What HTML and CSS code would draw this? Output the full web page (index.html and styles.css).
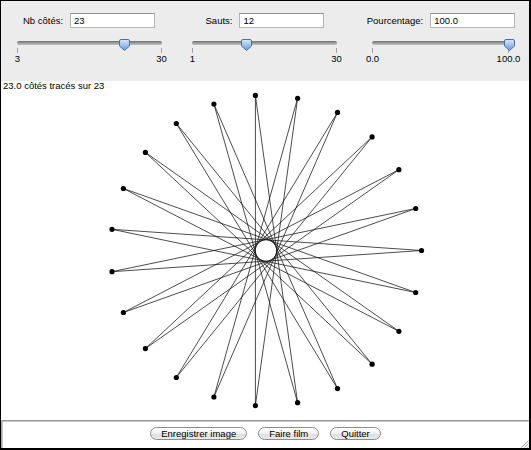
FILE: index.html
```html
<!DOCTYPE html>
<html>
<head>
<meta charset="utf-8">
<link rel="stylesheet" href="styles.css">
</head>
<body>
<div class="window">
  <div class="controls">
    <div class="group">
      <div class="field-row"><span class="lbl">Nb côtés:</span><div class="field">23</div></div>
      <div class="slider s1">
        <div class="track">
          <span class="thumb" style="left:74.07%"><svg width="11" height="12" viewBox="0 0 11 12"><defs><linearGradient id="tg1" x1="0" y1="0" x2="0" y2="1"><stop offset="0" stop-color="#dbe8fa"/><stop offset="0.5" stop-color="#9fc0ee"/><stop offset="1" stop-color="#6e98d8"/></linearGradient></defs><path d="M0.5 2 Q0.5 0.5 2 0.5 H9 Q10.5 0.5 10.5 2 V7 L5.5 11.5 L0.5 7 Z" fill="url(#tg1)" stroke="#4a6fab" stroke-width="1"/></svg></span>
        </div>
        <div class="ticks"><div class="tk"><i></i><span>3</span></div><div class="tk"><i></i><span>30</span></div></div>
      </div>
    </div>
    <div class="group">
      <div class="field-row"><span class="lbl">Sauts:</span><div class="field">12</div></div>
      <div class="slider s2">
        <div class="track">
          <span class="thumb" style="left:37.93%"><svg width="11" height="12" viewBox="0 0 11 12"><defs><linearGradient id="tg2" x1="0" y1="0" x2="0" y2="1"><stop offset="0" stop-color="#dbe8fa"/><stop offset="0.5" stop-color="#9fc0ee"/><stop offset="1" stop-color="#6e98d8"/></linearGradient></defs><path d="M0.5 2 Q0.5 0.5 2 0.5 H9 Q10.5 0.5 10.5 2 V7 L5.5 11.5 L0.5 7 Z" fill="url(#tg2)" stroke="#4a6fab" stroke-width="1"/></svg></span>
        </div>
        <div class="ticks"><div class="tk"><i></i><span>1</span></div><div class="tk"><i></i><span>30</span></div></div>
      </div>
    </div>
    <div class="group">
      <div class="field-row"><span class="lbl">Pourcentage:</span><div class="field">100.0</div></div>
      <div class="slider s3">
        <div class="track">
          <span class="thumb" style="left:100%"><svg width="11" height="12" viewBox="0 0 11 12"><defs><linearGradient id="tg3" x1="0" y1="0" x2="0" y2="1"><stop offset="0" stop-color="#dbe8fa"/><stop offset="0.5" stop-color="#9fc0ee"/><stop offset="1" stop-color="#6e98d8"/></linearGradient></defs><path d="M0.5 2 Q0.5 0.5 2 0.5 H9 Q10.5 0.5 10.5 2 V7 L5.5 11.5 L0.5 7 Z" fill="url(#tg3)" stroke="#4a6fab" stroke-width="1"/></svg></span>
        </div>
        <div class="ticks"><div class="tk"><i></i><span>0.0</span></div><div class="tk"><i></i><span>100.0</span></div></div>
      </div>
    </div>
  </div>

  <div class="canvas">
    <div class="status">23.0 côtés tracés sur 23</div>
    <svg class="drawing" width="528" height="339" viewBox="1 81 528 339">
      <polygon class="star" points="421.5,250.5 112.0,271.7 415.7,208.5 123.4,312.5 398.9,169.7 145.4,348.6 372.1,136.9 176.3,377.5 337.5,112.4 213.9,397.0 297.6,98.3 255.4,405.6 255.4,95.4 297.6,402.7 213.9,104.0 337.5,388.6 176.3,123.5 372.1,364.2 145.4,152.4 398.9,331.3 123.4,188.5 415.7,292.5 112.0,229.3"/>
      <g class="dots">
        <circle cx="421.5" cy="250.5" r="2.6"/>
        <circle cx="415.7" cy="208.5" r="2.6"/>
        <circle cx="398.9" cy="169.7" r="2.6"/>
        <circle cx="372.1" cy="136.9" r="2.6"/>
        <circle cx="337.5" cy="112.4" r="2.6"/>
        <circle cx="297.6" cy="98.3" r="2.6"/>
        <circle cx="255.4" cy="95.4" r="2.6"/>
        <circle cx="213.9" cy="104.0" r="2.6"/>
        <circle cx="176.3" cy="123.5" r="2.6"/>
        <circle cx="145.4" cy="152.4" r="2.6"/>
        <circle cx="123.4" cy="188.5" r="2.6"/>
        <circle cx="112.0" cy="229.3" r="2.6"/>
        <circle cx="112.0" cy="271.7" r="2.6"/>
        <circle cx="123.4" cy="312.5" r="2.6"/>
        <circle cx="145.4" cy="348.6" r="2.6"/>
        <circle cx="176.3" cy="377.5" r="2.6"/>
        <circle cx="213.9" cy="397.0" r="2.6"/>
        <circle cx="255.4" cy="405.6" r="2.6"/>
        <circle cx="297.6" cy="402.7" r="2.6"/>
        <circle cx="337.5" cy="388.6" r="2.6"/>
        <circle cx="372.1" cy="364.2" r="2.6"/>
        <circle cx="398.9" cy="331.3" r="2.6"/>
        <circle cx="415.7" cy="292.5" r="2.6"/>
      </g>
    </svg>
  </div>

  <div class="buttons">
    <button class="btn">Enregistrer image</button>
    <button class="btn">Faire film</button>
    <button class="btn">Quitter</button>
  </div>

  <svg class="grip" width="9" height="9" viewBox="0 0 9 9">
    <path d="M8.5 1.5 L1.5 8.5 M8.5 4.5 L4.5 8.5 M8.5 7.5 L7.5 8.5" stroke="#9a9a9a" stroke-width="1"/>
  </svg>
</div>
</body>
</html>
```

FILE: styles.css
```css
html, body {
  margin: 0;
  padding: 0;
  background: #ffffff;
}

body {
  font-family: "Liberation Sans", Arial, sans-serif;
  font-size: 9.5px;
  color: #000;
}

.window {
  position: relative;
  width: 531px;
  height: 450px;
  box-sizing: border-box;
  border-top: 1px solid #000;
  border-left: 1px solid #000;
  border-right: 2px solid #000;
  border-bottom: 2px solid #000;
  display: flex;
  flex-direction: column;
  overflow: hidden;
}

.controls {
  height: 80px;
  flex: none;
  background: #ececec;
  display: grid;
  grid-template-columns: 176px 176px 176px;
}

.group {
  display: flex;
  flex-direction: column;
  padding-top: 12px;
}

.field-row {
  display: flex;
  justify-content: center;
  align-items: center;
  gap: 7px;
  height: 15px;
}

.lbl {
  white-space: nowrap;
  line-height: 15px;
}

.field {
  width: 85px;
  height: 15px;
  box-sizing: border-box;
  background: #fff;
  border: 1px solid #b4b4b4;
  border-top-color: #8f8f8f;
  padding-left: 3px;
  line-height: 13px;
}

.slider {
  display: flex;
  flex-direction: column;
  margin-top: 13px;
}

.s1 { padding: 0 15px 0 16px; }
.s2 { padding: 0 16px 0 15px; }
.s3 { padding: 0 20px 0 19px; }

.track {
  position: relative;
  height: 4px;
  border-radius: 2px;
  background: linear-gradient(#6f6f6f, #a4a4a4 60%, #c4c4c4);
}

.thumb {
  position: absolute;
  top: -2px;
  width: 11px;
  height: 12px;
  margin-left: -5.5px;
  display: block;
}

.thumb svg {
  display: block;
}

.ticks {
  display: flex;
  justify-content: space-between;
  margin-top: 3px;
}

.tk {
  width: 1px;
  display: flex;
  flex-direction: column;
  align-items: center;
}

.tk i {
  display: block;
  width: 1px;
  height: 5px;
  background: #a0a0a0;
}

.tk span {
  white-space: nowrap;
  line-height: 10px;
  margin-top: 1px;
}

.canvas {
  flex: 1;
  display: grid;
  background: #fff;
  min-height: 0;
}

.canvas > * {
  grid-area: 1 / 1;
}

.status {
  align-self: start;
  padding-left: 2px;
  line-height: 10px;
  position: relative;
  z-index: 1;
}

.drawing {
  display: block;
}

.star {
  fill: none;
  stroke: #111;
  stroke-width: 0.75;
  stroke-linejoin: miter;
}

.dots circle {
  fill: #000;
}

.buttons {
  height: 28px;
  flex: none;
  box-sizing: border-box;
  background: #fff;
  border-top: 1px solid #9a9a9a;
  box-shadow: inset 1px 1px 0 #c8c8c8;
  border-left: 1px solid #a8a8a8;
  display: flex;
  justify-content: center;
  align-items: flex-start;
  gap: 11px;
  padding-top: 6px;
}

.btn {
  font-family: "Liberation Sans", Arial, sans-serif;
  font-size: 9.5px;
  color: #000;
  height: 13px;
  line-height: 11px;
  padding: 0 10px;
  margin: 0;
  border: 1px solid #8c8c8c;
  border-radius: 7px;
  background: linear-gradient(#ffffff, #f0f0f0 50%, #dedede 51%, #e9e9e9);
}

.grip {
  position: absolute;
  right: 0;
  bottom: 0;
  display: block;
}
```
